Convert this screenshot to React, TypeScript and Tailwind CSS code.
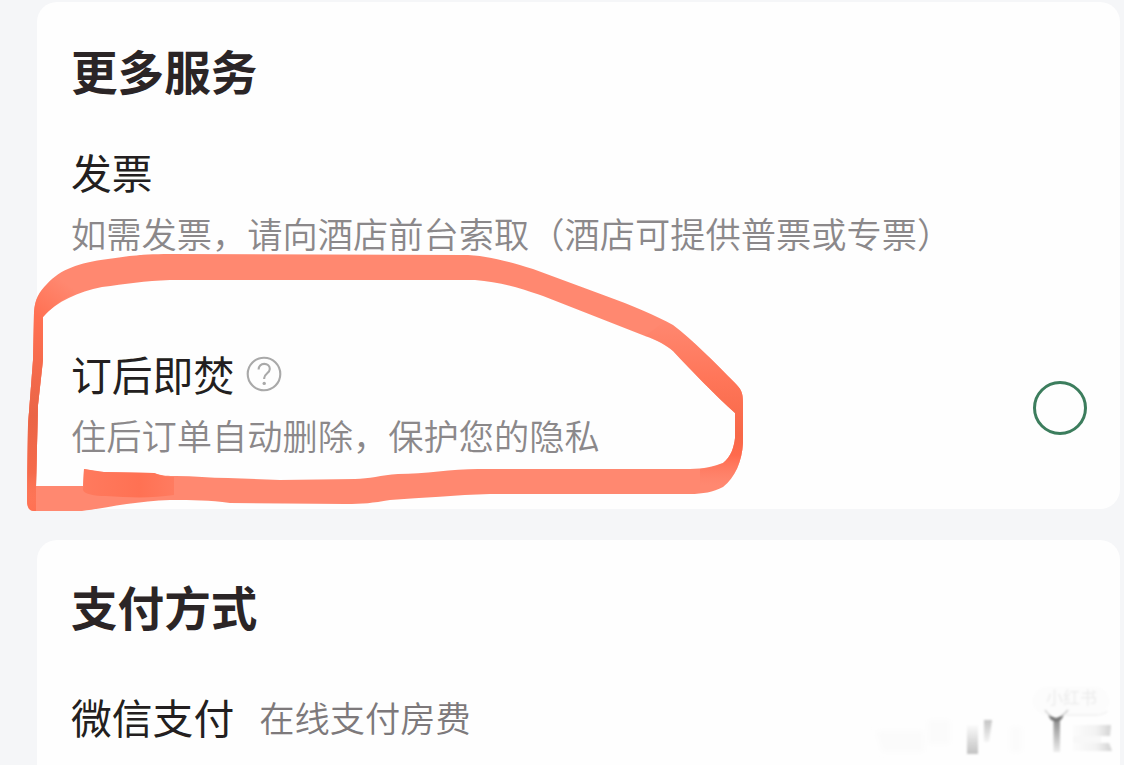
import React from 'react';

const QuestionIcon = () => (
  <svg width="36" height="36" viewBox="0 0 36 36" fill="none" stroke="#a9a9a9" className="ml-[12px] shrink-0">
    <circle cx="18" cy="18" r="16.3" strokeWidth="2.1" />
    <path d="M12.6 13.4c0-3.3 2.3-5.5 5.6-5.5s5.6 2.2 5.6 5.1c0 4.2-5.6 4.8-5.6 8.9v1.2" strokeWidth="2.1" />
    <circle cx="18.2" cy="27.4" r="1.7" fill="#a9a9a9" stroke="none" />
  </svg>
);

// Hand-drawn marker loop around the privacy row
const MarkerLoop = () => (
  <svg
    width="1124"
    height="765"
    viewBox="0 0 1124 765"
    className="pointer-events-none absolute left-0 top-0"
  >
    <defs>
      <linearGradient id="side" x1="62" y1="280" x2="36" y2="316" gradientUnits="userSpaceOnUse">
        <stop offset="0" stopColor="#ff7052" stopOpacity="0" />
        <stop offset="1" stopColor="#ff7052" />
      </linearGradient>
      <linearGradient id="sideDark" x1="0" y1="320" x2="0" y2="511" gradientUnits="userSpaceOnUse">
        <stop offset="0" stopColor="#ea6546" stopOpacity="0" />
        <stop offset="0.5" stopColor="#ea6546" />
        <stop offset="0.8" stopColor="#f56a4b" />
        <stop offset="1" stopColor="#ff8466" stopOpacity="0" />
      </linearGradient>
      <linearGradient id="turn" x1="0" y1="320" x2="0" y2="485" gradientUnits="userSpaceOnUse">
        <stop offset="0" stopColor="#ff765b" stopOpacity="0" />
        <stop offset="0.35" stopColor="#ff7659" />
        <stop offset="0.7" stopColor="#f76848" />
        <stop offset="0.82" stopColor="#ff6a4d" />
        <stop offset="1" stopColor="#ff7b63" stopOpacity="0" />
      </linearGradient>
      <linearGradient id="overlap" x1="84" y1="0" x2="176" y2="0" gradientUnits="userSpaceOnUse">
        <stop offset="0" stopColor="#ff7a5e" />
        <stop offset="0.6" stopColor="#ff7153" />
        <stop offset="1" stopColor="#ff7c61" />
      </linearGradient>
    </defs>
    <path
      fill="#ff8870"
      fillRule="evenodd"
      d="M34 312C35 299 39 292 47 284C61 269 78 263 108 259C129 256 142 254 170 254L462 255C485 255 503 260 533 269L606 296C631 305 657 316 673 325C692 339 715 363 734 382C741 389 743 392 743 403L743 443C742 461 735 478 723 487C713 492 703 494 690 494L490 494C456 495 423 498 390 500C372 503 364 504 345 504L230 503C209 500 194 500 170 500C137 501 105 508 82 511L34 511C29 511 27 507 27 500L28 425L33 360ZM43 317L43 360L38 405L36 486L83 486L84 469C91 470 98 472 104 472L154 473C162 476 169 476 176 476C194 476 210 478 228 478L280 480L355 479C369 479 381 475 398 474C425 474 452 469 478 469L690 469C703 469 715 466 723 463C731 457 734 447 735 438L735 413C715 395 691 370 673 351C666 345 657 340 645 336L543 296C515 286 498 282 475 280L170 280C145 281 125 284 102 287C78 292 57 301 43 317Z"
    />
    <path
      fill="url(#side)"
      d="M34 312C35 299 39 292 47 284C52 278 58 274 66 270L75 294C62 299 52 307 43 317L43 360L38 405L36 486L36 511L34 511C29 511 27 507 27 500L28 425L33 360Z"
    />
    <path fill="url(#sideDark)" d="M34 320L43 320L43 360L38 405L36 486L36 511L34 511C29 511 27 507 27 500L28 425L33 360Z" />
    <path
      fill="url(#turn)"
      d="M665 321L673 325C692 339 715 363 734 382C741 389 743 392 743 403L743 443C742 461 735 478 723 487L700 493L700 469C709 468 717 466 723 463C731 457 734 447 735 438L735 413C715 395 691 370 673 351C666 345 657 340 645 336Z"
    />
    <path fill="url(#overlap)" d="M84 469L104 472L154 473C162 476 168 477 174 477L174 495C154 498 133 498 105 496C95 496 84 494 83 490Z" />
  </svg>
);

// Smudged watermark in the lower right corner
const Watermark = () => (
  <svg width="264" height="105" viewBox="0 0 264 105" className="pointer-events-none absolute bottom-0 right-0">
    <defs>
      <linearGradient id="fadeDown" x1="0" y1="0" x2="0" y2="1">
        <stop offset="0" stopColor="#8a8a8a" />
        <stop offset="1" stopColor="#ececec" />
      </linearGradient>
      <linearGradient id="fadeUp" x1="0" y1="0" x2="0" y2="1">
        <stop offset="0" stopColor="#fbfbfb" />
        <stop offset="1" stopColor="#c2c2c2" />
      </linearGradient>
      <linearGradient id="fadeRight" x1="0" y1="0" x2="1" y2="0">
        <stop offset="0" stopColor="#fcfcfc" />
        <stop offset="0.6" stopColor="#f2f2f2" />
        <stop offset="1" stopColor="#d2d2d2" />
      </linearGradient>
      <filter id="soft" x="-20%" y="-20%" width="140%" height="140%">
        <feGaussianBlur stdDeviation="0.9" />
      </filter>
      <filter id="softer" x="-20%" y="-20%" width="140%" height="140%">
        <feGaussianBlur stdDeviation="2.5" />
      </filter>
    </defs>
    <path d="M16 71h48v21H22zM68 60h22v24H68zM150 67h12v25h-12z" fill="#fbfbfb" filter="url(#softer)" />
    <g filter="url(#soft)">
      <rect x="107" y="65" width="11" height="29" fill="url(#fadeUp)" />
      <path d="M124 60h8l-3 22h-5z" fill="url(#fadeDown)" opacity="0.5" />
      <rect x="173" y="27" width="76" height="28" rx="14" fill="#fcfcfc" />
      <path d="M206 55h30c6 0 9-1 11-4" fill="none" stroke="#efefef" strokeWidth="1.3" />
      <path d="M193.500 59h6.500v33h-6.500z" fill="url(#fadeDown)" />
      <path d="M185 50q4 6 11 9q7-3 12-9" fill="none" stroke="#c4c4c4" strokeWidth="1.3" />
      <path d="M188 55l8 3 8-3-3 5-5 2-5-2z" fill="#777777" />
      <path d="M213 65h38l-1 11h-37zM213 83h36l3 8h-39z" fill="url(#fadeRight)" />
      <path d="M213 76h28v7h-28z" fill="#f8f8f8" />
      <text x="186" y="44" fontSize="17" fill="#ebebeb">小红书</text>
    </g>
  </svg>
);

type RowTextProps = {
  title: string;
  desc: string;
  icon?: React.ReactNode;
};

const RowText = ({ title, desc, icon }: RowTextProps) => (
  <div>
    <div className="flex h-[48px] items-center">
      <h3 className="text-[40.8px] leading-[48px] text-[#231f20]">{title}</h3>
      {icon}
    </div>
    <p className="mt-[17px] text-[35.25px] leading-[40px] font-[350] text-[#8b888a]">{desc}</p>
  </div>
);

const App = () => {
  return (
    <div className="relative h-[765px] w-[1124px] overflow-hidden bg-[#f5f6f8] pl-[37px] pr-[4px] pt-[2px] font-['Noto_Sans_CJK_SC',sans-serif]">
      <section className="h-[507px] rounded-[20px] bg-[#fefefe] pl-[34px] pr-[33px] pt-[44px]">
        <h2 className="text-[46.6px] leading-[48px] font-bold text-[#2b2526]">更多服务</h2>
        <div className="mt-[54px]">
          <RowText title="发票" desc="如需发票，请向酒店前台索取（酒店可提供普票或专票）" />
        </div>
        <div className="mt-[97px] flex items-center justify-between">
          <RowText title="订后即焚" desc="住后订单自动删除，保护您的隐私" icon={<QuestionIcon />} />
          <span className="mt-[10px] h-[54px] w-[54px] rounded-full border-[3px] border-[#3c7d5d]" />
        </div>
      </section>

      <section className="mt-[31px] h-[260px] rounded-[20px] bg-[#fefefe] pl-[34px] pt-[42px]">
        <h2 className="text-[46.6px] leading-[48px] font-bold text-[#2b2526]">支付方式</h2>
        <div className="mt-[63px] flex h-[48px] items-center">
          <h3 className="text-[40.8px] leading-[48px] text-[#231f20]">微信支付</h3>
          <p className="ml-[25px] text-[35.25px] leading-[40px] font-[350] text-[#7d797b]">在线支付房费</p>
        </div>
      </section>

      <MarkerLoop />
      <Watermark />
    </div>
  );
};

export default App;
